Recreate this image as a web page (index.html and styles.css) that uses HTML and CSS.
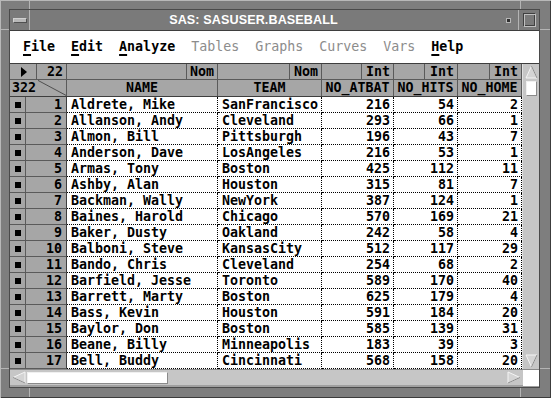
FILE: index.html
```html
<!DOCTYPE html>
<html lang="en">
<head>
    <meta charset="UTF-8">
    <title>SAS: SASUSER.BASEBALL</title>
    <link rel="stylesheet" href="styles.css">
</head>
<body>
    <div class="window">
        <div class="titlebar">
            <div class="tbtn menu-btn"><span class="bar"></span></div>
            <div class="title">SAS: SASUSER.BASEBALL</div>
            <div class="tbtn min-btn"><span class="dot"></span></div>
            <div class="tbtn max-btn"><span class="box"></span></div>
        </div>

        <div class="menubar">
            <span class="item"><u>F</u>ile</span>
            <span class="item"><u>E</u>dit</span>
            <span class="item"><u>A</u>nalyze</span>
            <span class="item off">Tables</span>
            <span class="item off">Graphs</span>
            <span class="item off">Curves</span>
            <span class="item off">Vars</span>
            <span class="item"><u>H</u>elp</span>
        </div>

        <div class="body-area">
            <div class="table">
                <!-- type row -->
                <div class="hrow">
                    <div class="hc w27 arrow-cell">
                        <svg width="8" height="10" viewBox="0 0 8 10"><polygon points="1,0 7,5 1,10" fill="#000"/></svg>
                    </div>
                    <div class="hc w30 right">22</div>
                    <div class="hc w120"></div>
                    <div class="hc w31 right">Nom</div>
                    <div class="hc w72"></div>
                    <div class="hc w32 right">Nom</div>
                    <div class="hc w40"></div>
                    <div class="hc w32 right">Int</div>
                    <div class="hc w31"></div>
                    <div class="hc w33 right">Int</div>
                    <div class="hc w32"></div>
                    <div class="hc w32 right">Int</div>
                </div>
                <!-- name row -->
                <div class="hrow names">
                    <div class="hc w57 corner">
                        <span class="count">322</span>
                        <svg class="diag" width="30" height="16" viewBox="0 0 30 16"><line x1="0" y1="0" x2="30" y2="16" stroke="#4a4a4a" stroke-width="1"/></svg>
                    </div>
                    <div class="hc c-name center">NAME</div>
                    <div class="hc c-team center">TEAM</div>
                    <div class="hc c-atbat center">NO_ATBAT</div>
                    <div class="hc c-hits center">NO_HITS</div>
                    <div class="hc c-home center">NO_HOME</div>
                </div>

                <div id="rows"></div>
            </div>

            <div class="vscroll">
                <div class="arr">
                    <svg width="13" height="14" viewBox="0 0 13 14"><polygon points="6.5,1 12,13 1,13" fill="#d4d4d4" stroke="#f4f4f4"/><line x1="6.5" y1="1" x2="12" y2="13" stroke="#8a8a8a"/></svg>
                </div>
                <div class="vthumb"></div>
                <div class="vtrack"></div>
                <div class="arr">
                    <svg width="13" height="14" viewBox="0 0 13 14"><polygon points="1,1 12,1 6.5,13" fill="#d4d4d4" stroke="#f4f4f4"/><line x1="12" y1="1" x2="6.5" y2="13" stroke="#8a8a8a"/></svg>
                </div>
            </div>
        </div>

        <div class="hscroll">
            <div class="harr">
                <svg width="14" height="13" viewBox="0 0 14 13"><polygon points="1,6.5 13,1 13,12" fill="#d4d4d4" stroke="#f4f4f4"/><line x1="13" y1="12" x2="1" y2="6.5" stroke="#8a8a8a"/></svg>
            </div>
            <div class="hthumb"></div>
            <div class="htrack"></div>
            <div class="harr">
                <svg width="14" height="13" viewBox="0 0 14 13"><polygon points="1,1 13,6.5 1,12" fill="#d4d4d4" stroke="#f4f4f4"/><line x1="13" y1="6.5" x2="1" y2="12" stroke="#8a8a8a"/></svg>
            </div>
            <div class="hcorner"></div>
        </div>
    </div>

    <script>
        // 데이터: 이름, 팀, 타수, 안타, 홈런
        var 선수들 = [
            ['Aldrete, Mike', 'SanFrancisco', 216, 54, 2],
            ['Allanson, Andy', 'Cleveland', 293, 66, 1],
            ['Almon, Bill', 'Pittsburgh', 196, 43, 7],
            ['Anderson, Dave', 'LosAngeles', 216, 53, 1],
            ['Armas, Tony', 'Boston', 425, 112, 11],
            ['Ashby, Alan', 'Houston', 315, 81, 7],
            ['Backman, Wally', 'NewYork', 387, 124, 1],
            ['Baines, Harold', 'Chicago', 570, 169, 21],
            ['Baker, Dusty', 'Oakland', 242, 58, 4],
            ['Balboni, Steve', 'KansasCity', 512, 117, 29],
            ['Bando, Chris', 'Cleveland', 254, 68, 2],
            ['Barfield, Jesse', 'Toronto', 589, 170, 40],
            ['Barrett, Marty', 'Boston', 625, 179, 4],
            ['Bass, Kevin', 'Houston', 591, 184, 20],
            ['Baylor, Don', 'Boston', 585, 139, 31],
            ['Beane, Billy', 'Minneapolis', 183, 39, 3],
            ['Bell, Buddy', 'Cincinnati', 568, 158, 20]
        ]

        var html = ''
        선수들.forEach(function(p, i){
            html += '<div class="drow">'
                + '<div class="rc mark"><span></span></div>'
                + '<div class="rc num">' + (i + 1) + '</div>'
                + '<div class="dc c-name">' + p[0] + '</div>'
                + '<div class="dc c-team">' + p[1] + '</div>'
                + '<div class="dc c-atbat right">' + p[2] + '</div>'
                + '<div class="dc c-hits right">' + p[3] + '</div>'
                + '<div class="dc c-home right">' + p[4] + '</div>'
                + '</div>'
        })
        document.getElementById('rows').innerHTML = html
    </script>
</body>
</html>
```

FILE: styles.css
```css
body{
    margin: 0;
    width: 551px;
    height: 398px;
    box-sizing: border-box;
    padding: 10px 12px 11px 10px;
    background-color: #7e7e7e;
    /* 모서리 표시선 */
    background-image:
        linear-gradient(90deg, transparent 29px, #b4b4b4 29px, #b4b4b4 30px, transparent 30px),
        linear-gradient(90deg, transparent 520px, #b4b4b4 520px, #b4b4b4 521px, transparent 521px),
        linear-gradient(180deg, transparent 29px, #b4b4b4 29px, #b4b4b4 30px, transparent 30px),
        linear-gradient(180deg, transparent 368px, #b4b4b4 368px, #b4b4b4 369px, transparent 369px);
    box-shadow: inset 1px 1px 0 #b8b8b8, inset -1px -1px 0 #3c3c3c;
    font-family: "DejaVu Sans Mono", monospace;
    font-size: 13.3px;
    font-weight: bold;
    overflow: hidden;
}

.window{
    width: 529px;
    height: 377px;
    display: flex;
    flex-direction: column;
    outline: 1px solid #4a4a4a;
}

/* 제목 줄 */
.titlebar{
    height: 21px;
    box-sizing: border-box;
    background: #7a7a7a;
    border-bottom: 1px solid #3e3e3e;
    display: flex;
    align-items: stretch;
}

.tbtn{
    width: 20px;
    box-sizing: border-box;
    display: flex;
    justify-content: center;
    align-items: center;
}

.menu-btn{
    border-right: 1px solid #b4b4b4;
}

.menu-btn .bar{
    width: 12px;
    height: 3px;
    background: #b8b8b8;
    border: 1px solid #505050;
    border-top-color: #d0d0d0;
    border-left-color: #d0d0d0;
}

.title{
    flex: 1;
    display: flex;
    justify-content: center;
    align-items: center;
    padding-right: 22px;
    color: #fff;
    font-family: "Liberation Sans", Arial, sans-serif;
    font-size: 12.6px;
    font-weight: bold;
    letter-spacing: 0.1px;
}

.min-btn{
    border-right: 1px solid #b4b4b4;
}

.min-btn .dot{
    width: 3px;
    height: 3px;
    background: #303030;
    border: 1px solid #b8b8b8;
}

.max-btn .box{
    width: 11px;
    height: 12px;
    border: 1px solid #404040;
    border-right-color: #c0c0c0;
    border-bottom-color: #c0c0c0;
    box-shadow: inset 1px 1px 0 #c0c0c0, inset -1px -1px 0 #404040;
}

/* 메뉴 */
.menubar{
    height: 33px;
    box-sizing: border-box;
    background: #fff;
    border-bottom: 1px solid #3e3e3e;
    display: flex;
    align-items: center;
    gap: 16px;
    padding: 0 0 1px 13px;
    color: #000;
}

.menubar u{
    text-decoration-thickness: 2px;
    text-underline-offset: 3px;
}

.menubar .off{
    color: #8c8c8c;
    font-weight: normal;
}

/* 표 */
.body-area{
    display: flex;
    height: 305px;
}

.table{
    width: 512px;
    display: flex;
    flex-direction: column;
}

.hrow{
    display: flex;
    height: 16px;
    background: #a6a6a6;
}

.hrow.names{
    height: 17px;
    border-bottom: 1px solid #3e3e3e;
    box-sizing: border-box;
}

.hc{
    box-sizing: border-box;
    height: 16px;
    border-right: 1px solid #5a5a5a;
    border-bottom: 1px solid #5a5a5a;
    line-height: 15px;
    padding: 0 3px;
    white-space: nowrap;
    overflow: hidden;
}

.hrow.names .hc{
    border-bottom: none;
}

.right{ text-align: right; }
.center{ text-align: center; }

.w27{ width: 27px; }
.w30{ width: 30px; }
.w31{ width: 31px; }
.w32{ width: 32px; }
.w33{ width: 33px; }
.w40{ width: 40px; }
.w57{ width: 57px; }
.w72{ width: 72px; }
.w120{ width: 120px; }

.c-name{ width: 151px; }
.c-team{ width: 104px; }
.c-atbat{ width: 72px; }
.c-hits{ width: 64px; }
.c-home{ width: 64px; }

.arrow-cell{
    display: flex;
    align-items: center;
    justify-content: center;
    padding-right: 2px;
}

.corner{
    display: flex;
    padding: 0;
}

.corner .count{
    width: 27px;
    padding-left: 2px;
}

.corner .diag{
    display: block;
}

.drow{
    display: flex;
    height: 16px;
}

.rc{
    box-sizing: border-box;
    background: #a6a6a6;
    border-right: 1px solid #5a5a5a;
    border-bottom: 1px solid #5a5a5a;
    line-height: 15px;
}

.rc.mark{
    width: 16px;
    display: flex;
    align-items: center;
    justify-content: center;
}

.rc.mark span{
    width: 6px;
    height: 6px;
    background: #000;
}

.rc.num{
    width: 41px;
    text-align: right;
    padding-right: 4px;
    border-right-color: #3e3e3e;
}

.dc{
    box-sizing: border-box;
    background: #fff;
    border-right: 1px dotted #000;
    border-bottom: 1px dotted #000;
    line-height: 15px;
    padding: 0 3px 0 4px;
    white-space: nowrap;
    overflow: hidden;
}

/* 스크롤바 */
.vscroll{
    width: 17px;
    background: #c6c6c6;
    display: flex;
    flex-direction: column;
    align-items: center;
    border-left: 1px solid #e0e0e0;
    box-sizing: border-box;
}

.arr{
    height: 16px;
    display: flex;
    align-items: center;
    justify-content: center;
}

.vthumb{
    width: 11px;
    height: 15px;
    margin-top: 1px;
    background: #fff;
    border: 1px solid #8a8a8a;
    border-top-color: #f0f0f0;
    border-left-color: #f0f0f0;
    box-sizing: border-box;
}

.vtrack{
    flex: 1;
}

.hscroll{
    height: 18px;
    box-sizing: border-box;
    background: #c6c6c6;
    border-top: 1px solid #8a8a8a;
    border-bottom: 2px solid #a0a0a0;
    display: flex;
    align-items: center;
}

.harr{
    width: 17px;
    display: flex;
    align-items: center;
    justify-content: center;
}

.hthumb{
    width: 141px;
    height: 12px;
    background: #fff;
    border: 1px solid #8a8a8a;
    border-top-color: #f0f0f0;
    border-left-color: #f0f0f0;
    box-sizing: border-box;
}

.htrack{
    flex: 1;
}

.hcorner{
    width: 16px;
    height: 16px;
    margin-left: 1px;
    background: #fff;
}
```
